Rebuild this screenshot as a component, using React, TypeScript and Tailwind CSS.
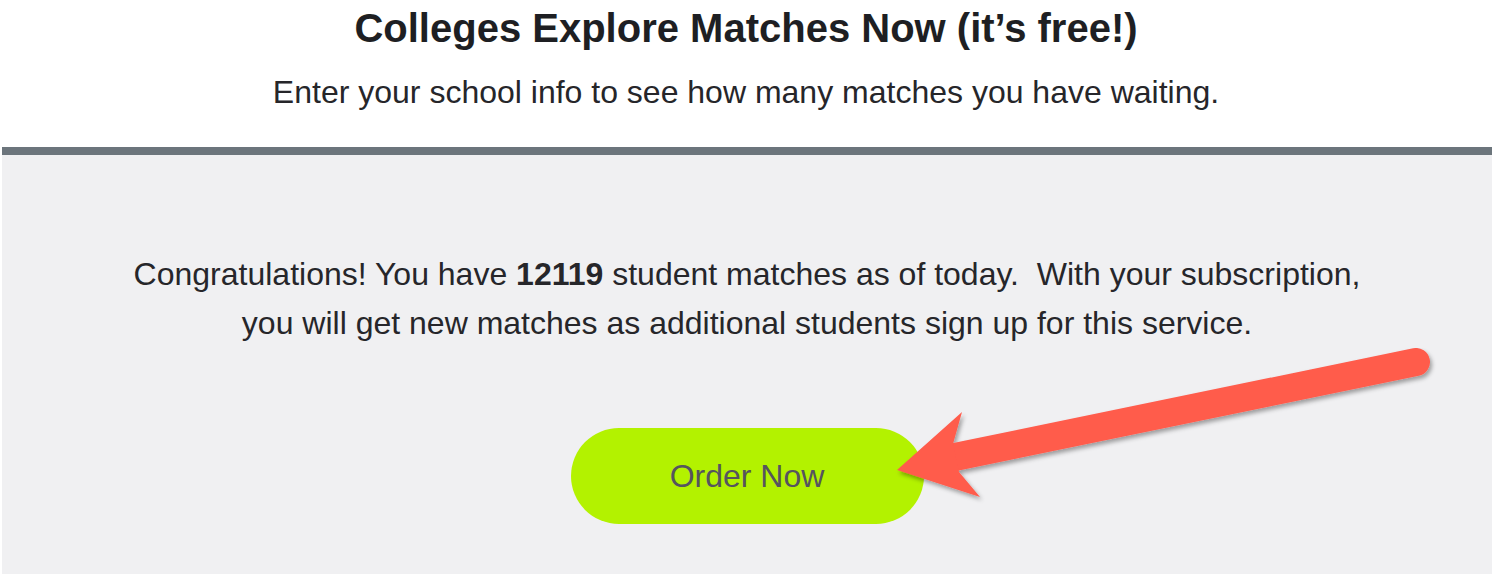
import React from 'react';

const Arrow = () => (
  <svg
    className="pointer-events-none absolute left-0 top-0"
    width="1492"
    height="574"
    viewBox="0 0 1492 574"
  >
    <defs>
      <filter id="arrowShadow" x="-10%" y="-10%" width="120%" height="130%">
        <feDropShadow dx="2" dy="3" stdDeviation="2" floodColor="#000" floodOpacity="0.35" />
      </filter>
    </defs>
    <g filter="url(#arrowShadow)" fill="#ff5b4c">
      <line x1="950" y1="458" x2="1416" y2="362" stroke="#ff5b4c" strokeWidth="28" strokeLinecap="round" />
      <polygon points="897,470 962,412 953,444 959,472 980,497" />
    </g>
  </svg>
);

export default function App() {
  return (
    <div className="relative h-[574px] w-full overflow-hidden bg-white font-['Liberation_Sans',Arial,sans-serif] text-[#26262a]">
      {/* header */}
      <div className="flex flex-col items-center">
        <h1 className="text-[40px] font-bold leading-[56px] text-[#1e1f23]">
          Colleges Explore Matches Now (it’s free!)
        </h1>
        <p className="mt-[14px] text-[32px] leading-[44px]">
          Enter your school info to see how many matches you have waiting.
        </p>
      </div>

      {/* panel */}
      <div className="ml-[2px] mt-[33px] h-[430px] border-t-8 border-[#6c757c] bg-[#f0f0f2]">
        <div className="flex flex-col items-center pt-[95px]">
          <p className="text-center text-[32px] leading-[49px]">
            Congratulations! You have <span className="font-bold">12119</span> student matches as of today.{'\u00a0'} With your subscription,
            <br />
            you will get new matches as additional students sign up for this service.
          </p>
          <button className="mt-[80px] flex h-[96px] w-[353px] items-center justify-center rounded-full bg-[#b3f200] text-[32px] text-[#55545e]">
            Order Now
          </button>
        </div>
      </div>

      <Arrow />
    </div>
  );
}
